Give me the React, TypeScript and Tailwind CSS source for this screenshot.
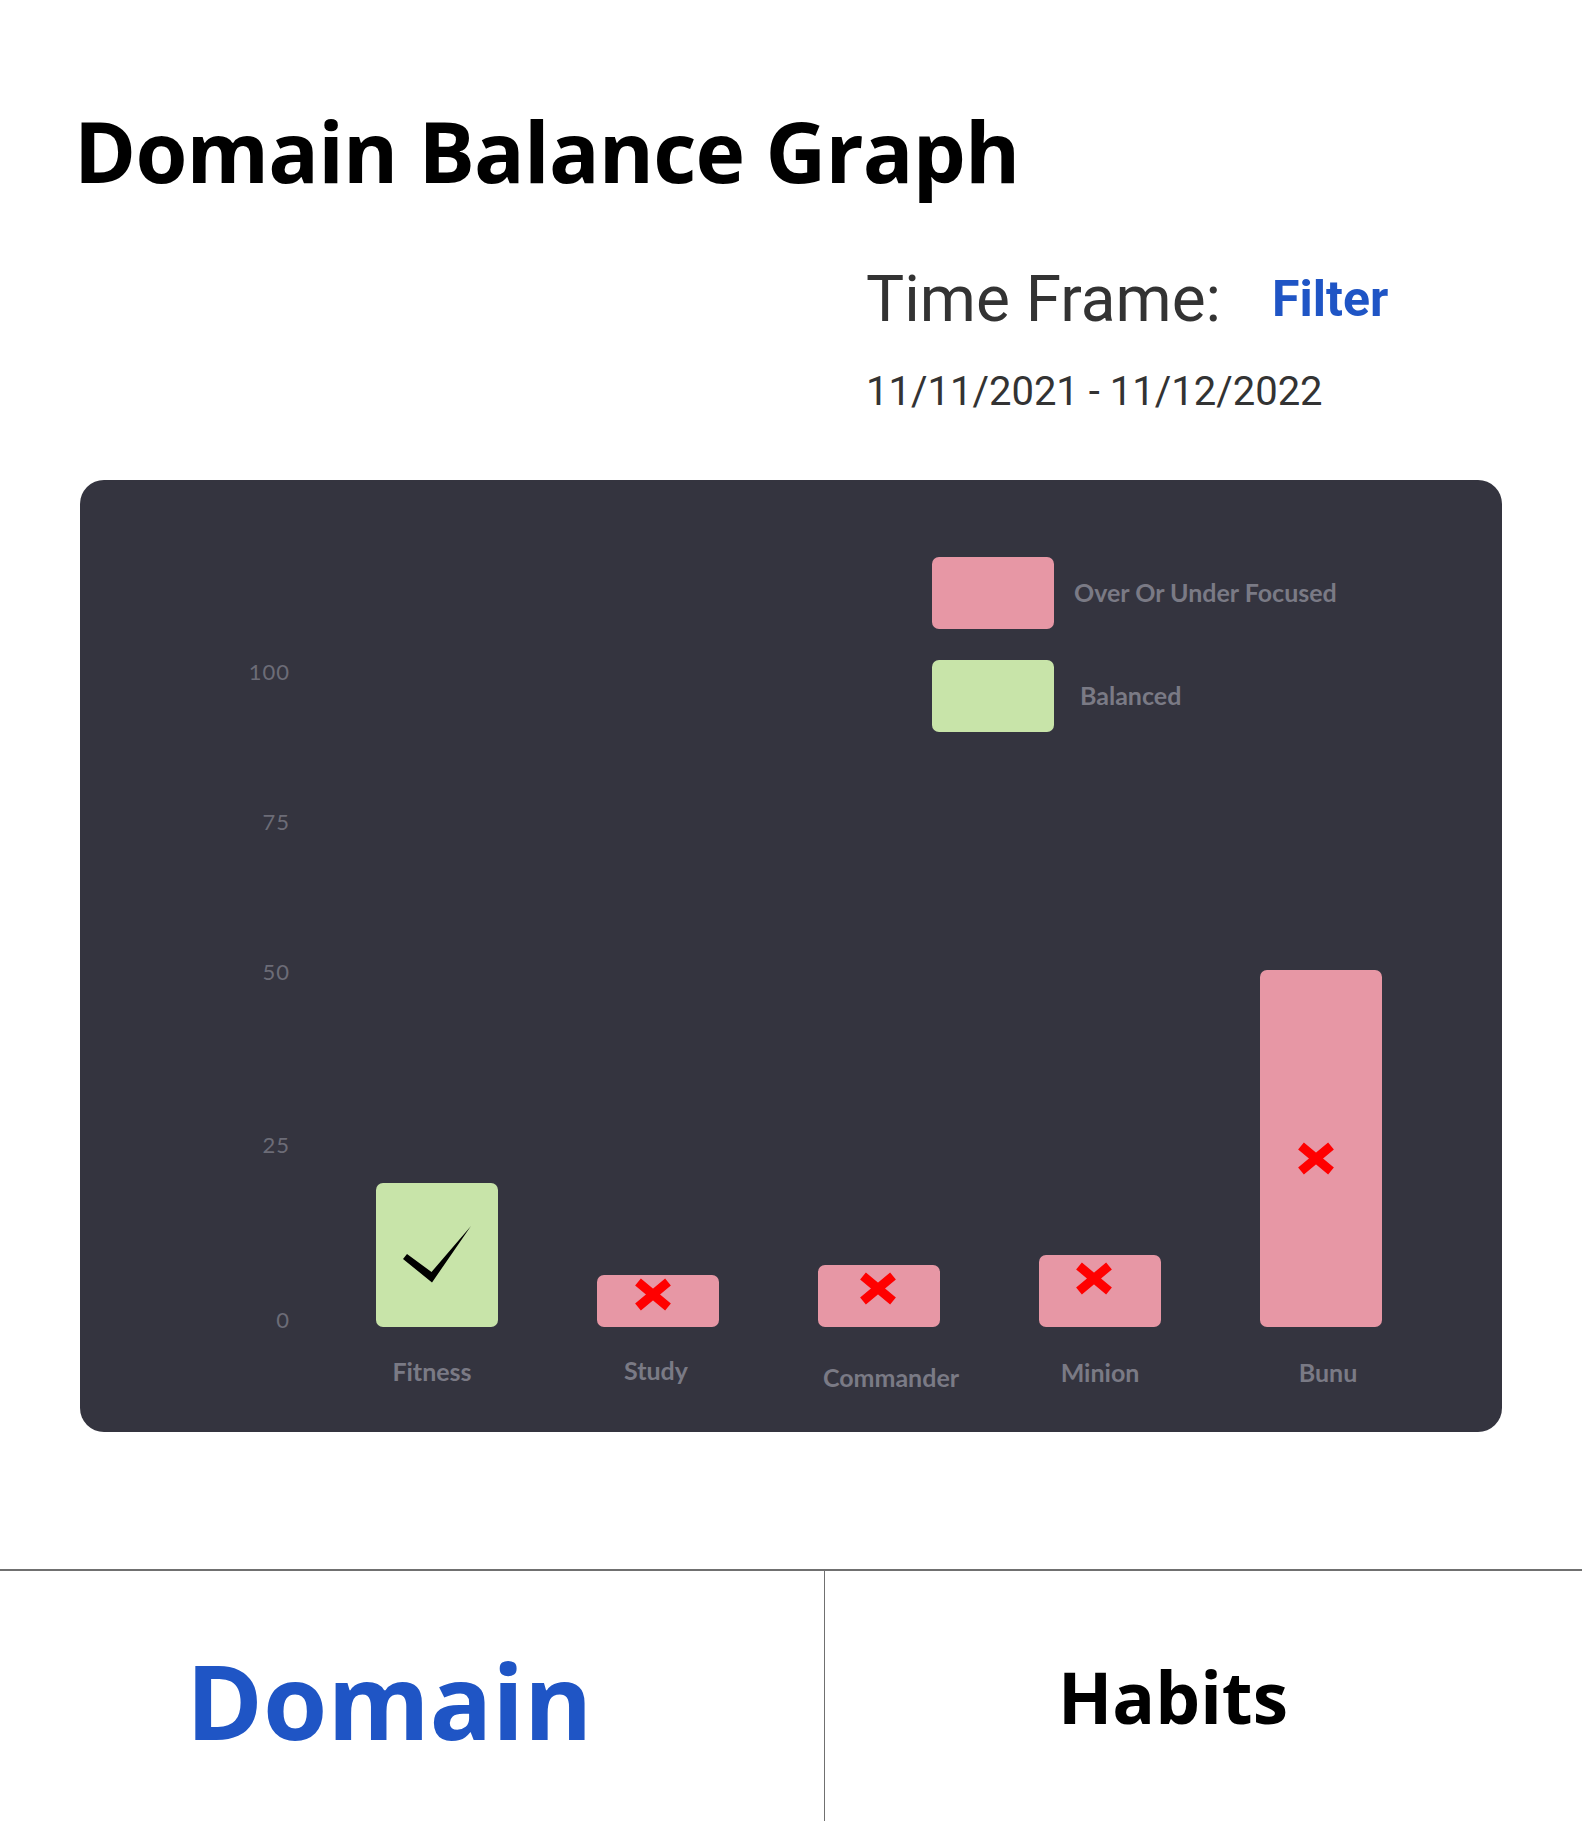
const bars = [
  {
    name: "Fitness",
    height: "h-[144px]",
    color: "bg-[#c8e4a9]",
    balanced: true,
    iconPad: "",
    labelPos: "mt-[32px] -translate-x-[5px]",
  },
  {
    name: "Study",
    height: "h-[52px]",
    color: "bg-[#e797a5]",
    balanced: false,
    iconPad: "pl-[37px] pt-[3px]",
    labelPos: "mt-[31px] -translate-x-[2px]",
  },
  {
    name: "Commander",
    height: "h-[62px]",
    color: "bg-[#e797a5]",
    balanced: false,
    iconPad: "pl-[41px] pt-[7px]",
    labelPos: "mt-[38px] translate-x-[12px]",
  },
  {
    name: "Minion",
    height: "h-[72px]",
    color: "bg-[#e797a5]",
    balanced: false,
    iconPad: "pl-[36px] pt-[7px]",
    labelPos: "mt-[33px]",
  },
  {
    name: "Bunu",
    height: "h-[357px]",
    color: "bg-[#e797a5]",
    balanced: false,
    iconPad: "pl-[37px] pt-[172px]",
    labelPos: "mt-[33px] translate-x-[7px]",
  },
];

const yLabels = [
  { value: "100", gap: "" },
  { value: "75", gap: "mt-[128px]" },
  { value: "50", gap: "mt-[128px]" },
  { value: "25", gap: "mt-[151px]" },
  { value: "0", gap: "mt-[153px]" },
];

function Cross() {
  return (
    <svg width="38" height="33" viewBox="0 0 38 33">
      <path d="M4 4 L34 29 M34 4 L4 29" stroke="#ff0000" strokeWidth="9" fill="none" />
    </svg>
  );
}

function Check() {
  return (
    <svg className="w-full h-full" viewBox="0 0 122 144">
      <polygon points="27,76 31,71 55.5,89 95,43 56,99.5" fill="#000000" />
    </svg>
  );
}

export default function App() {
  return (
    <div className="w-full min-h-[1834px] bg-white flex flex-col">
      {/* Title */}
      <h1 className="pl-[74px] pt-[109px] text-[84px] leading-none font-bold text-black font-['Open_Sans',sans-serif] tracking-[-0.8px]">
        Domain Balance Graph
      </h1>

      {/* Time frame */}
      <div className="pl-[866px] mt-[75px] font-['Roboto',sans-serif]">
        <div className="flex items-end">
          <span className="text-[64px] leading-none text-[#333333]">Time Frame:</span>
          <span className="ml-[51px] mb-[8px] text-[50px] leading-none font-bold text-[#1f55c5]">
            Filter
          </span>
        </div>
        <div className="mt-[40px] text-[40px] leading-none text-[#333333]">
          11/11/2021 - 11/12/2022
        </div>
      </div>

      {/* Chart card */}
      <div className="mx-[80px] mt-[68px] h-[952px] rounded-[24px] bg-[#34343f] flex font-['Lato',sans-serif]">
        {/* Y axis */}
        <div className="w-[210px] pt-[181px] flex flex-col items-end">
          {yLabels.map((l) => (
            <span key={l.value} className={`text-[22px] leading-none tracking-[1px] text-[#6c6c77] ${l.gap}`}>
              {l.value}
            </span>
          ))}
        </div>

        {/* Plot */}
        <div className="flex-1 flex flex-col">
          {/* Legend */}
          <div className="pl-[642px] pt-[77px] flex flex-col gap-[31px]">
            <div className="flex items-center">
              <div className="w-[122px] h-[72px] rounded-[7px] bg-[#e797a5]" />
              <span className="ml-[20px] text-[25px] font-bold text-[#7a7a85] whitespace-nowrap">
                Over Or Under Focused
              </span>
            </div>
            <div className="flex items-center">
              <div className="w-[122px] h-[72px] rounded-[7px] bg-[#c8e4a9]" />
              <span className="ml-[26px] text-[25px] font-bold text-[#7a7a85]">Balanced</span>
            </div>
          </div>

          {/* Bars */}
          <div className="h-[595px] pl-[86px] flex items-end gap-[99px]">
            {bars.map((b) => (
              <div key={b.name} className={`w-[122px] ${b.height} ${b.color} rounded-[7px] ${b.iconPad}`}>
                {b.balanced ? <Check /> : <Cross />}
              </div>
            ))}
          </div>

          {/* X labels */}
          <div className="pl-[86px] flex gap-[99px]">
            {bars.map((b) => (
              <div key={b.name} className="w-[122px] flex justify-center">
                <span className={`text-[25px] leading-none font-bold text-[#7a7a85] whitespace-nowrap ${b.labelPos}`}>
                  {b.name}
                </span>
              </div>
            ))}
          </div>
        </div>
      </div>

      {/* Bottom tabs */}
      <div className="mt-[137px] h-[2px] bg-[#707070]" />
      <div className="h-[250px] flex font-['Open_Sans',sans-serif]">
        <div className="w-[824px] flex items-center pl-[186px]">
          <span className="text-[104px] leading-none font-bold text-[#1f55c5] mt-[8px]">Domain</span>
        </div>
        <div className="w-px bg-[#707070]" />
        <div className="flex-1 flex items-center pl-[233px]">
          <span className="text-[71px] leading-none font-bold text-black">Habits</span>
        </div>
      </div>
    </div>
  );
}
